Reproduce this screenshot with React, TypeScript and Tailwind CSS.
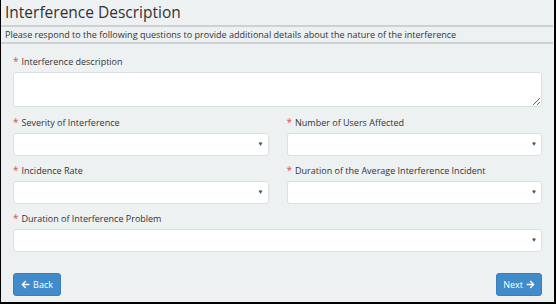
import { FaArrowLeft, FaArrowRight } from 'react-icons/fa';

const font = { fontFamily: '"Open Sans", "Liberation Sans", sans-serif' };

function Label({ text }: { text: string }) {
  return (
    <div className="flex items-start gap-[3px] text-[9px] leading-[12px] text-[#333] mb-[4px]">
      <span className="text-[#d9534f] text-[10px] leading-[10px]">*</span>
      <span>{text}</span>
    </div>
  );
}

function Select() {
  return (
    <div className="h-[23px] bg-white border border-[#dcdfe1] rounded-[3px] flex items-center justify-end pr-[4px]">
      <span className="text-[6px] text-[#444]">▼</span>
    </div>
  );
}

export default function App() {
  return (
    <div
      className="w-[556px] h-[304px] bg-[#eef1f2] border-l border-r-2 border-b-2 border-black flex flex-col overflow-hidden"
      style={font}
    >
      {/* Header */}
      <div className="h-[25px] px-[4px] pt-[2px] text-[15.5px] leading-[20px] text-[#333]">
        Interference Description
      </div>
      <div className="h-[2px] bg-[#cdd1d3] mr-[1px]" />
      <div className="h-[15px] px-[4px] pt-[2px] text-[9.05px] leading-[12px] text-[#333]">
        Please respond to the following questions to provide additional details about the nature of the interference
      </div>
      <div className="h-[2px] bg-[#cdd1d3] mr-[1px]" />

      {/* Form */}
      <div className="flex-1 px-[12px] pt-[12px] flex flex-col">
        <Label text="Interference description" />
        <textarea className="h-[35px] bg-white border border-[#dcdfe1] rounded-[3px] outline-none" />

        <div className="grid grid-cols-2 gap-x-[18px] mt-[10px]">
          <div>
            <Label text="Severity of Interference" />
            <Select />
          </div>
          <div>
            <Label text="Number of Users Affected" />
            <Select />
          </div>
        </div>

        <div className="grid grid-cols-2 gap-x-[18px] mt-[9px]">
          <div>
            <Label text="Incidence Rate" />
            <Select />
          </div>
          <div>
            <Label text="Duration of the Average Interference Incident" />
            <Select />
          </div>
        </div>

        <div className="mt-[9px]">
          <Label text="Duration of Interference Problem" />
          <Select />
        </div>

        <div className="flex justify-between mt-[21px]">
          <button className="h-[23px] w-[48px] bg-[#428bca] border border-[#3a7fbd] rounded-[3px] text-white text-[9px] flex items-center justify-center gap-[3px]">
            <FaArrowLeft className="w-[9px] h-[9px]" />
            Back
          </button>
          <button className="h-[23px] w-[46px] bg-[#428bca] border border-[#3a7fbd] rounded-[3px] text-white text-[9px] flex items-center justify-center gap-[3px]">
            Next
            <FaArrowRight className="w-[9px] h-[9px]" />
          </button>
        </div>
      </div>
    </div>
  );
}
